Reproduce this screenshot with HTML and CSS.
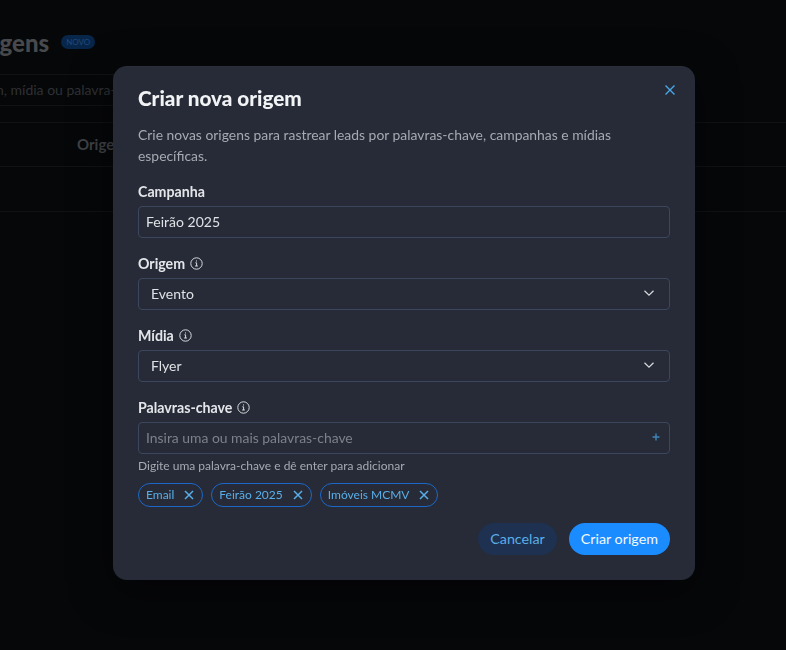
FILE: index.html

```html
<!DOCTYPE html>
<html lang="pt-BR">
<head>
    <meta charset="utf-8">
    <title>Criar nova origem</title>
    <link rel="stylesheet" href="styles.css">
</head>
<body>
    <div class="page">
        <div class="page-header">
            <h1 class="page-title">Origens</h1>
            <span class="page-badge">NOVO</span>
        </div>
        <div class="page-search">Buscar por campanha, origem, mídia ou palavra-chave</div>
        <div class="page-table-head"><span class="page-col">Origem</span></div>
        <div class="page-table-row"></div>
    </div>

    <div class="modal-overlay">
        <div class="modal">
            <button class="modal-close" aria-label="Fechar">
                <svg width="12" height="12" viewBox="0 0 12 12"><path d="M1.5 1.5l9 9M10.500 1.500l-9 9" /></svg>
            </button>
            <h2 class="modal-title">Criar nova origem</h2>
            <p class="modal-text">Crie novas origens para rastrear leads por palavras-chave, campanhas e mídias específicas.</p>

            <div class="field">
                <div class="field-label">Campanha</div>
                <div class="field-box field-box-text">Feirão 2025</div>
            </div>

            <div class="field">
                <div class="field-label">Origem
                    <svg class="info-icon" width="13" height="13" viewBox="0 0 13 13"><circle cx="6.500" cy="6.500" r="5.700" /><path d="M5.400 5.800h1.200v3.200M5.100 9h2.800M6.500 3.400v1.100" /></svg>
                </div>
                <div class="field-box field-box-select">Evento
                    <svg class="chevron" width="12" height="8" viewBox="0 0 12 8"><path d="M1.500 1.800L6 6.200l4.500-4.400" /></svg>
                </div>
            </div>

            <div class="field">
                <div class="field-label">Mídia
                    <svg class="info-icon" width="13" height="13" viewBox="0 0 13 13"><circle cx="6.500" cy="6.500" r="5.700" /><path d="M5.400 5.800h1.200v3.200M5.100 9h2.800M6.500 3.400v1.100" /></svg>
                </div>
                <div class="field-box field-box-select">Flyer
                    <svg class="chevron" width="12" height="8" viewBox="0 0 12 8"><path d="M1.500 1.800L6 6.200l4.500-4.400" /></svg>
                </div>
            </div>

            <div class="field">
                <div class="field-label">Palavras-chave
                    <svg class="info-icon" width="13" height="13" viewBox="0 0 13 13"><circle cx="6.500" cy="6.500" r="5.700" /><path d="M5.400 5.800h1.200v3.200M5.100 9h2.800M6.500 3.400v1.100" /></svg>
                </div>
                <div class="field-box field-box-keyword">
                    <span class="placeholder">Insira uma ou mais palavras-chave</span>
                    <svg class="plus" width="8" height="8" viewBox="0 0 8 8"><path d="M4 .5v7M.5 4h7" /></svg>
                </div>
                <div class="field-hint">Digite uma palavra-chave e dê enter para adicionar</div>
            </div>

            <div class="tags">
                <span class="tag">Email <svg width="10" height="10" viewBox="0 0 10 10"><path d="M1 1l8 8M9 1l-8 8" /></svg></span>
                <span class="tag">Feirão 2025 <svg width="10" height="10" viewBox="0 0 10 10"><path d="M1 1l8 8M9 1l-8 8" /></svg></span>
                <span class="tag">Imóveis MCMV <svg width="10" height="10" viewBox="0 0 10 10"><path d="M1 1l8 8M9 1l-8 8" /></svg></span>
            </div>

            <div class="modal-actions">
                <button class="button button-secondary">Cancelar</button>
                <button class="button button-primary">Criar origem</button>
            </div>
        </div>
    </div>
</body>
</html>
```

FILE: styles.css

```css
html, body {
    margin: 0;
    padding: 0;
    width: 100%;
    height: 100%;
    background: #060709;
    font-family: 'Lato', 'Noto Sans', sans-serif;
    overflow: hidden;
}

* {
    box-sizing: border-box;
}

.page {
    width: 100%;
    height: 100%;
    padding-top: 29px;
    color: #3f4247;
}

.page-header {
    display: flex;
    align-items: center;
    gap: 12px;
    height: 26px;
    margin-left: -35px;
}

.page-title {
    margin: 0;
    font-size: 24px;
    font-weight: 900;
    color: #47494d;
}

.page-badge {
    padding: 0 5px;
    height: 14px;
    line-height: 14px;
    border-radius: 7px;
    background: #07264a;
    color: #204a78;
    font-size: 8px;
}

.page-search {
    margin-top: 19px;
    width: 500px;
    height: 32px;
    line-height: 30px;
    margin-left: -177px;
    border-top: 1px solid #101216;
    border-bottom: 1px solid #101216;
    font-size: 14px;
    color: #2e3135;
    white-space: nowrap;
}

.page-table-head {
    margin-top: 16px;
    height: 45px;
    line-height: 43px;
    border-top: 1px solid #101216;
    border-bottom: 1px solid #101216;
    padding-left: 77px;
    font-size: 15px;
    font-weight: 700;
}

.page-table-row {
    height: 45px;
    border-bottom: 1px solid #101216;
}

.modal-overlay {
    position: fixed;
    top: 0;
    left: 0;
    width: 100vw;
    height: 100vh;
    display: flex;
    align-items: flex-start;
    justify-content: flex-start;
    padding: 66px 0 0 113px;
}

.modal {
    position: relative;
    width: 582px;
    height: 514px;
    padding: 20px 25px 25px;
    background: #262b37;
    border-radius: 14px;
    box-shadow: 0 10px 40px rgba(0, 0, 0, 0.5), inset 0 1px 0 rgba(255, 255, 255, 0.02);
}

.modal-close {
    position: absolute;
    top: 18px;
    right: 19px;
    padding: 0;
    width: 12px;
    height: 12px;
    border: none;
    background: none;
    display: block;
}

.modal-close svg {
    display: block;
    fill: none;
    stroke: #4aa8e8;
    stroke-width: 1.4;
}

.modal-title {
    margin: 0;
    font-size: 20.700px;
    line-height: 24px;
    font-weight: 900;
    color: #f2f3f5;
}

.modal-text {
    margin: 14px 0 0 0;
    font-size: 13.900px;
    line-height: 21px;
    color: #a6aab2;
}

.field {
    margin-top: 16px;
}

.field-label {
    display: flex;
    align-items: center;
    gap: 5px;
    height: 20px;
    padding-bottom: 1px;
    font-size: 14.200px;
    font-weight: 700;
    color: #e4e6ea;
}

.info-icon {
    fill: none;
    stroke: #d8dade;
    stroke-width: 1;
}

.field-box {
    display: flex;
    align-items: center;
    justify-content: space-between;
    height: 32px;
    margin-top: 4px;
    padding-bottom: 2px;
    border: 1px solid #3c465c;
    border-radius: 4px;
    font-size: 14px;
    color: #dfe1e5;
}

.field-box-text,
.field-box-keyword {
    padding-left: 7px;
    padding-right: 8px;
}

.field-box-select {
    padding-left: 12px;
    padding-right: 14px;
}

.chevron {
    fill: none;
    stroke: #d8dade;
    stroke-width: 1.200;
}

.placeholder {
    color: #7c818b;
    font-size: 13.900px;
}

.plus {
    margin-right: 1px;
    fill: none;
    stroke: #3f86b8;
    stroke-width: 1.400;
}

.field-hint {
    margin-top: 4px;
    font-size: 12px;
    line-height: 16px;
    color: #a6aab2;
}

.tags {
    display: flex;
    gap: 8px;
    margin-top: 9px;
}

.tag {
    display: flex;
    align-items: center;
    gap: 10px;
    height: 24px;
    padding: 0 8px 1px 7px;
    border: 1px solid #1c68c9;
    border-radius: 12px;
    font-size: 12px;
    color: #5aaee8;
}

.tag svg {
    margin-top: 1px;
    fill: none;
    stroke: #5aaee8;
    stroke-width: 1.500;
}

.modal-actions {
    display: flex;
    justify-content: flex-end;
    gap: 12px;
    margin-top: 16px;
}

.button {
    height: 32px;
    padding: 0 12px 1px;
    border: none;
    border-radius: 16px;
    font-family: inherit;
    font-size: 14.300px;
}

.button-secondary {
    background: #1e3150;
    color: #5aaee8;
}

.button-primary {
    background: #1a8cff;
    color: #f4f8ff;
}
```
